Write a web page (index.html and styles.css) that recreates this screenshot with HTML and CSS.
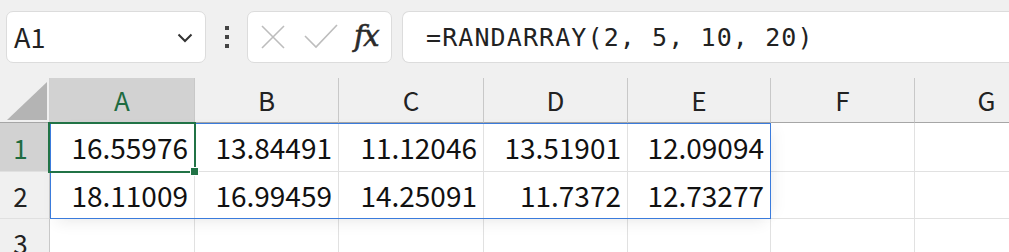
FILE: index.html
```html
<!DOCTYPE html>
<html>
<head>
<meta charset="utf-8">
<link rel="stylesheet" href="styles.css">
</head>
<body>
<div class="toolbar">
  <div class="namebox">
    <span class="nb-text">A1</span>
    <svg class="chev" width="16" height="10" viewBox="0 0 16 10"><path d="M1.5 1.5 L8 8 L14.5 1.5" fill="none" stroke="#333" stroke-width="2"/></svg>
  </div>
  <div class="dots"><i></i><i></i><i></i></div>
  <div class="fxbox">
    <svg class="ico" width="24" height="24" viewBox="0 0 24 24"><path d="M1 1 L23 23 M23 1 L1 23" stroke="#bdbdbd" stroke-width="1.6" fill="none"/></svg>
    <svg class="ico" width="34" height="26" viewBox="0 0 34 26"><path d="M1 12 L12 23 L33 1" stroke="#bdbdbd" stroke-width="1.6" fill="none"/></svg>
    <span class="fx">fx</span>
  </div>
  <div class="formula">=RANDARRAY(2, 5, 10, 20)</div>
</div>
<div class="sheet">
  <div class="grid">
    <div class="corner"><svg width="40" height="38" viewBox="0 0 40 38"><path d="M0 38 L40 38 L40 0 Z" fill="#b4b4b4"/></svg></div>
    <div class="ch sel">A</div><div class="ch">B</div><div class="ch">C</div><div class="ch">D</div><div class="ch">E</div><div class="ch">F</div><div class="ch">G</div>

    <div class="rh sel r1">1</div>
    <div class="c r1">16.55976</div><div class="c r1">13.84491</div><div class="c r1">11.12046</div><div class="c r1">13.51901</div><div class="c r1">12.09094</div><div class="c r1"></div><div class="c r1"></div>

    <div class="rh">2</div>
    <div class="c">18.11009</div><div class="c">16.99459</div><div class="c">14.25091</div><div class="c">11.7372</div><div class="c">12.73277</div><div class="c"></div><div class="c"></div>

    <div class="rh">3</div>
    <div class="c"></div><div class="c"></div><div class="c"></div><div class="c"></div><div class="c"></div><div class="c"></div><div class="c"></div>
  </div>
  <div class="spill"></div>
  <div class="active"><span class="handle"></span></div>
</div>
</body>
</html>
```
FILE: styles.css
```css
html, body {
  margin: 0;
  padding: 0;
  background: #f0f0f0;
  overflow: hidden;
  width: 1009px;
  height: 252px;
}
.toolbar {
  display: flex;
  align-items: stretch;
  height: 52px;
  padding: 11px 0 0 6px;
}
.toolbar > * {
  flex: none;
}
.namebox {
  width: 200px;
  background: #fff;
  border: 1px solid #dcdcdc;
  border-radius: 7px;
  display: flex;
  align-items: center;
  justify-content: space-between;
  padding: 0 12px 0 7px;
  box-sizing: border-box;
}
.nb-text {
  font-family: "Noto Sans CJK JP", "Noto Sans", sans-serif;
  font-size: 27px;
  color: #222;
  margin-top: -2px;
}
.chev { margin-top: 2px; }
.dots {
  width: 41px;
  display: flex;
  flex-direction: column;
  align-items: center;
  justify-content: center;
  gap: 5px;
}
.dots i {
  display: block;
  width: 4px;
  height: 4px;
  background: #444;
}
.fxbox {
  width: 145px;
  background: #fff;
  border: 1px solid #dcdcdc;
  border-radius: 7px;
  box-sizing: border-box;
  display: flex;
  align-items: center;
  padding: 0 0 0 13px;
  gap: 19px;
}
.fx {
  font-family: "DejaVu Serif", serif;
  font-style: italic;
  font-size: 29px;
  color: #2b2b2b;
  margin-left: -3px;
  letter-spacing: -1.5px;
  margin-top: -3px;
  -webkit-text-stroke: 0.6px #2b2b2b;
}
.formula {
  margin-left: 10px;
  width: 620px;
  background: #fff;
  border: 1px solid #dcdcdc;
  border-right: none;
  border-radius: 7px 0 0 7px;
  box-sizing: border-box;
  display: flex;
  align-items: center;
  padding-left: 23px;
  font-family: "DejaVu Sans Mono", monospace;
  font-size: 25px;
  letter-spacing: 1.1px;
  color: #222;
}
.sheet {
  position: relative;
  margin-top: 15px;
}
.grid {
  display: grid;
  grid-template-columns: 50px 145px 144px 145px 144px 143px 144px 144px;
  grid-template-rows: 45px 49px 47px 47px;
  font-family: "Noto Sans CJK JP", "Noto Sans", sans-serif;
}
.corner {
  background: #f0f0f0;
  border-right: 1px solid #d0d0d0;
  border-bottom: 1px solid #a6a6a6;
  display: flex;
  align-items: flex-end;
  justify-content: flex-end;
  padding: 0 2px 2px 0;
}
.ch {
  background: #f0f0f0;
  border-right: 1px solid #c8c8c8;
  border-bottom: 1px solid #a6a6a6;
  display: flex;
  align-items: center;
  justify-content: center;
  font-size: 26px;
  color: #222;
  padding-bottom: 1px;
}
.ch.sel {
  background: #d2d2d2;
  color: #1e6b41;
}
.rh {
  background: #f0f0f0;
  border-right: 1px solid #c8c8c8;
  border-bottom: 1px solid #e0e0e0;
  display: flex;
  align-items: center;
  justify-content: center;
  padding-right: 8px;
  font-size: 26px;
  color: #222;
}
.rh.sel {
  background: #d2d2d2;
  color: #1e6b41;
}
.c {
  background: #fff;
  border-right: 1px solid #e1e1e1;
  border-bottom: 1px solid #e1e1e1;
  display: flex;
  align-items: center;
  justify-content: flex-end;
  padding-right: 6px;
  font-size: 28px;
  color: #111;
}
.spill {
  position: absolute;
  left: 50px;
  top: 45px;
  width: 721px;
  height: 96px;
  border: 1px solid #3a7bdc;
  box-sizing: border-box;
  box-shadow: 0 10px 14px -6px rgba(0,0,0,0.07), 10px 0 14px -6px rgba(0,0,0,0.05);
  pointer-events: none;
}
.active {
  position: absolute;
  left: 48px;
  top: 44px;
  width: 148px;
  height: 51px;
  border: 2px solid #217346;
  box-sizing: border-box;
}
.handle {
  position: absolute;
  right: -5px;
  bottom: -5px;
  width: 7px;
  height: 7px;
  background: #217346;
  border: 1px solid #fff;
}
```
